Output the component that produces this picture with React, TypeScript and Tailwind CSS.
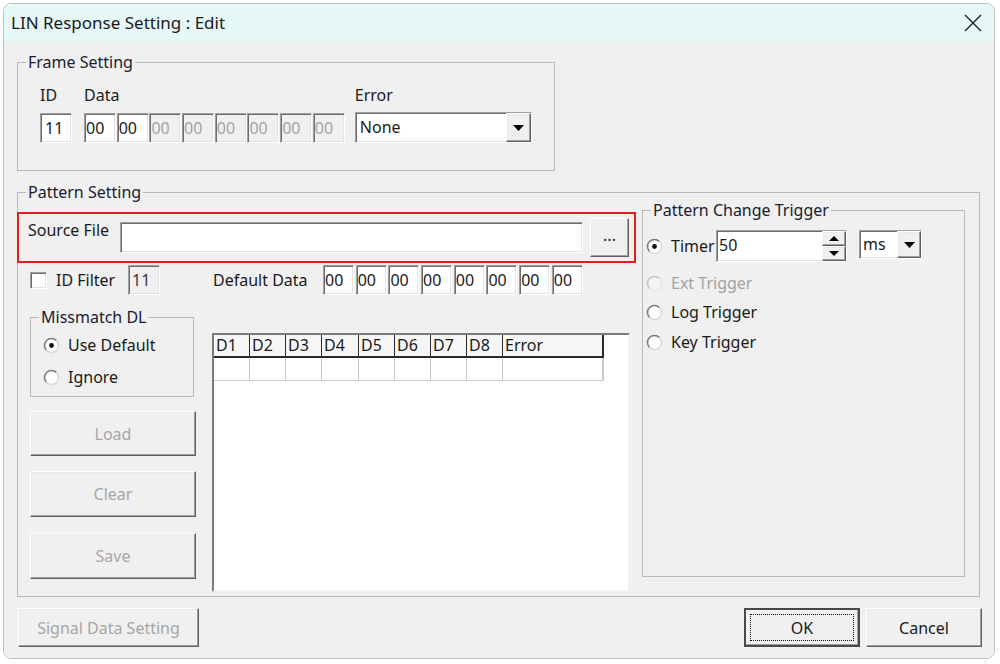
import React from 'react'

const sunken =
  'border border-t-[#a0a0a0] border-l-[#a0a0a0] border-r-white border-b-white shadow-[inset_1px_1px_0_#6d6d6d,inset_-1px_-1px_0_#e3e3e3]'
const raised =
  'border border-t-white border-l-white border-r-[#5f5f5f] border-b-[#5f5f5f] shadow-[inset_-1px_-1px_0_#a0a0a0,inset_1px_1px_0_#e9e9e9]'

function Edit({ value, className = '', muted = false, grey = false }: { value: string; className?: string; muted?: boolean; grey?: boolean }) {
  return (
    <div
      className={`${sunken} flex items-center text-[16px] leading-none ${grey ? 'bg-[#f0f0f0]' : 'bg-white'} ${
        muted ? 'text-[#a3a3a3]' : 'text-[#1a1a1a]'
      } ${className}`}
    >
      {value}
    </div>
  )
}

function Btn({ label, className = '', disabled = false }: { label: string; className?: string; disabled?: boolean }) {
  return (
    <div
      className={`${raised} flex items-center justify-center bg-[#f0f0f0] text-[16px] ${
        disabled ? 'text-[#a6a6a6]' : 'text-[#1a1a1a]'
      } ${className}`}
    >
      {label}
    </div>
  )
}

function Radio({ checked = false, disabled = false }: { checked?: boolean; disabled?: boolean }) {
  return (
    <svg width="17" height="17" viewBox="0 0 17 17" className="shrink-0">
      <circle cx="8.5" cy="8.5" r="7" fill={disabled ? '#f4f4f4' : '#ffffff'} />
      <path d="M3.55 13.45 A7 7 0 0 1 13.45 3.55" stroke={disabled ? '#c4c4c4' : '#7c7c7c'} strokeWidth="1.6" fill="none" />
      <path d="M13.45 3.55 A7 7 0 0 1 3.55 13.45" stroke={disabled ? '#e6e6e6' : '#d9d9d9'} strokeWidth="1.6" fill="none" />
      {checked && <circle cx="8.5" cy="8.5" r="2.4" fill="#111" />}
    </svg>
  )
}

function DropBtn({ className = '' }: { className?: string }) {
  return (
    <div className={`${raised} flex items-center justify-center bg-[#f0f0f0] ${className}`}>
      <svg width="11" height="6" viewBox="0 0 11 6">
        <path d="M0 0 H11 L5.5 6 Z" fill="#000" />
      </svg>
    </div>
  )
}

function RadioRow({ label, checked, disabled, className = '' }: { label: string; checked?: boolean; disabled?: boolean; className?: string }) {
  return (
    <div className={`flex items-center h-[20px] ${className}`}>
      <Radio checked={checked} disabled={disabled} />
      <span className={`ml-[8px] text-[16px] leading-[20px] ${disabled ? 'text-[#a3a3a3]' : 'text-[#1a1a1a]'}`}>{label}</span>
    </div>
  )
}

const headCols = [
  { label: 'D1', w: 'w-[36px]' },
  { label: 'D2', w: 'w-[36px]' },
  { label: 'D3', w: 'w-[36px]' },
  { label: 'D4', w: 'w-[37px]' },
  { label: 'D5', w: 'w-[36px]' },
  { label: 'D6', w: 'w-[36px]' },
  { label: 'D7', w: 'w-[36px]' },
  { label: 'D8', w: 'w-[36px]' },
  { label: 'Error', w: 'w-[101px]' },
]

const legend = 'ml-[8px] px-[2px] text-[16px] leading-[20px] text-[#1b1b30]'

export default function App() {
  const frameData = ['00', '00', '00', '00', '00', '00', '00', '00']

  return (
    <div className="w-[1000px] h-[664px] bg-white pt-[3px] pl-[3px] font-['Noto_Sans',sans-serif] text-[#1a1a1a]">
      <div className="w-[992px] h-[656px] flex flex-col border border-[#c2c2c2] rounded-[8px] overflow-hidden">
        {/* title bar */}
        <div className="h-[38px] shrink-0 bg-[#e6f7f7] flex items-center pl-[7px] pr-[12px]">
          <span className="text-[17px] text-[#1a1a1a]">LIN Response Setting : Edit</span>
          <div className="flex-1" />
          <svg width="18" height="18" viewBox="0 0 18 18">
            <path d="M1 1 L17 17 M17 1 L1 17" stroke="#222" strokeWidth="1.4" />
          </svg>
        </div>

        {/* body */}
        <div className="flex-1 bg-[#f0f0f0] flex flex-col">
          {/* Frame Setting */}
          <fieldset className="ml-[13px] mt-[10px] w-[538px] h-[119px] border border-[#b9b9b9]">
            <legend className={legend}>Frame Setting</legend>
            <div className="flex mt-[13px] ml-[22px]">
              <div className="flex flex-col gap-[8px]">
                <span className="text-[16px] leading-[20px]">ID</span>
                <Edit value="11" className="w-[32px] h-[30px] pl-[4px]" />
              </div>
              <div className="flex flex-col gap-[8px] ml-[12px]">
                <span className="text-[16px] leading-[20px]">Data</span>
                <div className="flex gap-[0.7px]">
                  {frameData.map((d, i) => (
                    <Edit key={i} value={d} grey={i > 1} muted={i > 1} className="w-[32px] h-[30px] pl-[1px]" />
                  ))}
                </div>
              </div>
              <div className="flex flex-col gap-[8px] ml-[10px]">
                <span className="text-[16px] leading-[20px]">Error</span>
                <div className={`${sunken} bg-white w-[177px] h-[31px] flex items-stretch -mt-[1px]`}>
                  <span className="flex-1 pl-[4px] text-[16px] leading-[29px]">None</span>
                  <DropBtn className="w-[25px]" />
                </div>
              </div>
            </div>
          </fieldset>

          {/* Pattern Setting */}
          <fieldset className="ml-[13px] mt-[11px] w-[963px] h-[415px] border border-[#b9b9b9]">
            <legend className={legend}>Pattern Setting</legend>
            <div className="flex">
              {/* left column */}
              <div className="w-[624px] flex flex-col">
                <div className="-ml-[1px] mt-[10px] w-[619px] h-[51px] border-2 border-[#e41c1c] flex items-start">
                  <span className="ml-[9px] mt-[6px] w-[92px] text-[16px] leading-[20px]">Source File</span>
                  <Edit value="" className="mt-[8px] w-[463px] h-[31px]" />
                  <Btn label="..." className="ml-[7px] mt-[4px] w-[39px] h-[39px] pb-[6px]" />
                </div>

                <div className="flex items-center mt-[2px] h-[30px]">
                  <div className={`${sunken} bg-white ml-[12px] w-[17px] h-[17px]`} />
                  <span className="ml-[9px] w-[72px] text-[16px] leading-[20px]">ID Filter</span>
                  <Edit value="11" grey className="w-[32px] h-[30px] pl-[3px] text-[#3a3a3a]" />
                  <span className="ml-[53px] w-[110px] text-[16px] leading-[20px]">Default Data</span>
                  <div className="flex gap-[1.7px]">
                    {frameData.map((d, i) => (
                      <Edit key={i} value={d} className="w-[31px] h-[30px] pl-[1px]" />
                    ))}
                  </div>
                </div>

                <div className="flex">
                  <div className="ml-[12px] w-[166px] flex flex-col">
                    <fieldset className="mt-[12px] w-[164px] h-[90px] border border-[#b9b9b9]">
                      <legend className={legend}>Missmatch DL</legend>
                      <RadioRow label="Use Default" checked className="ml-[12px] mt-[8px]" />
                      <RadioRow label="Ignore" className="ml-[12px] mt-[12px]" />
                    </fieldset>
                    <Btn label="Load" disabled className="mt-[14px] w-[166px] h-[45px]" />
                    <Btn label="Clear" disabled className="mt-[15px] w-[166px] h-[46px]" />
                    <Btn label="Save" disabled className="mt-[16px] w-[166px] h-[46px]" />
                  </div>

                  <div className="ml-[16px] mt-[38px] w-[418px] h-[259px] bg-white border-2 border-t-[#7a7a7a] border-l-[#7a7a7a] border-r-[#f2f2f2] border-b-[#f2f2f2]">
                    <div className="flex h-[23px] w-fit border-b-2 border-[#2a2a2a] bg-[#f6f6f6]">
                      {headCols.map((c, i) => (
                        <div
                          key={c.label}
                          className={`${c.w} h-full pl-[2px] text-[16px] leading-[21px] border-r ${
                            i === headCols.length - 1 ? 'border-r-2' : ''
                          } border-[#2a2a2a]`}
                        >
                          {c.label}
                        </div>
                      ))}
                    </div>
                    <div className="flex h-[23px] w-fit border-b border-[#cacaca]">
                      {headCols.map((c, i) => (
                        <div key={c.label} className={`${c.w} h-full border-r ${i === headCols.length - 1 ? 'border-r-2' : ''} border-[#cacaca]`} />
                      ))}
                    </div>
                  </div>
                </div>
              </div>

              {/* right group */}
              <fieldset className="-mt-[2px] w-[323px] h-[377px] border border-[#b9b9b9]">
                <legend className={legend}>Pattern Change Trigger</legend>
                <div className="flex items-start mt-[10px]">
                  <div className="flex items-center h-[32px] ml-[3px]">
                    <Radio checked />
                    <span className="ml-[8px] w-[45px] text-[16px] leading-[20px]">Timer</span>
                  </div>
                  <div className={`${sunken} bg-white w-[131px] h-[32px] flex items-stretch`}>
                    <span className="flex-1 pl-[2px] text-[16px] leading-[28px]">50</span>
                    <div className="w-[24px] flex flex-col">
                      <div className={`${raised} flex-1 flex items-center justify-center bg-[#f0f0f0]`}>
                        <svg width="10" height="5" viewBox="0 0 10 5">
                          <path d="M0 5 H10 L5 0 Z" fill="#000" />
                        </svg>
                      </div>
                      <div className={`${raised} flex-1 flex items-center justify-center bg-[#f0f0f0]`}>
                        <svg width="10" height="5" viewBox="0 0 10 5">
                          <path d="M0 0 H10 L5 5 Z" fill="#000" />
                        </svg>
                      </div>
                    </div>
                  </div>
                  <div className={`${sunken} bg-white ml-[12px] w-[63px] h-[29px] flex items-stretch`}>
                    <span className="flex-1 pl-[3px] text-[16px] leading-[27px]">ms</span>
                    <DropBtn className="w-[24px]" />
                  </div>
                </div>
                <RadioRow label="Ext Trigger" disabled className="ml-[3px] mt-[11px]" />
                <RadioRow label="Log Trigger" className="ml-[3px] mt-[9px]" />
                <RadioRow label="Key Trigger" className="ml-[3px] mt-[10px]" />
              </fieldset>
            </div>
          </fieldset>

          {/* bottom buttons */}
          <div className="flex mt-[11px] ml-[14px] mr-[12px]">
            <Btn label="Signal Data Setting" disabled className="w-[181px] h-[39px]" />
            <div className="flex-1" />
            <div className="w-[116px] h-[39px] border-2 border-[#4a4a4a] bg-[#f0f0f0] flex p-[4px] shadow-[inset_-1px_-1px_0_#a0a0a0]">
              <div className="flex-1 border border-dotted border-[#111] flex items-center justify-center text-[16px]">OK</div>
            </div>
            <Btn label="Cancel" className="ml-[6px] w-[116px] h-[39px]" />
          </div>
        </div>
      </div>
    </div>
  )
}
